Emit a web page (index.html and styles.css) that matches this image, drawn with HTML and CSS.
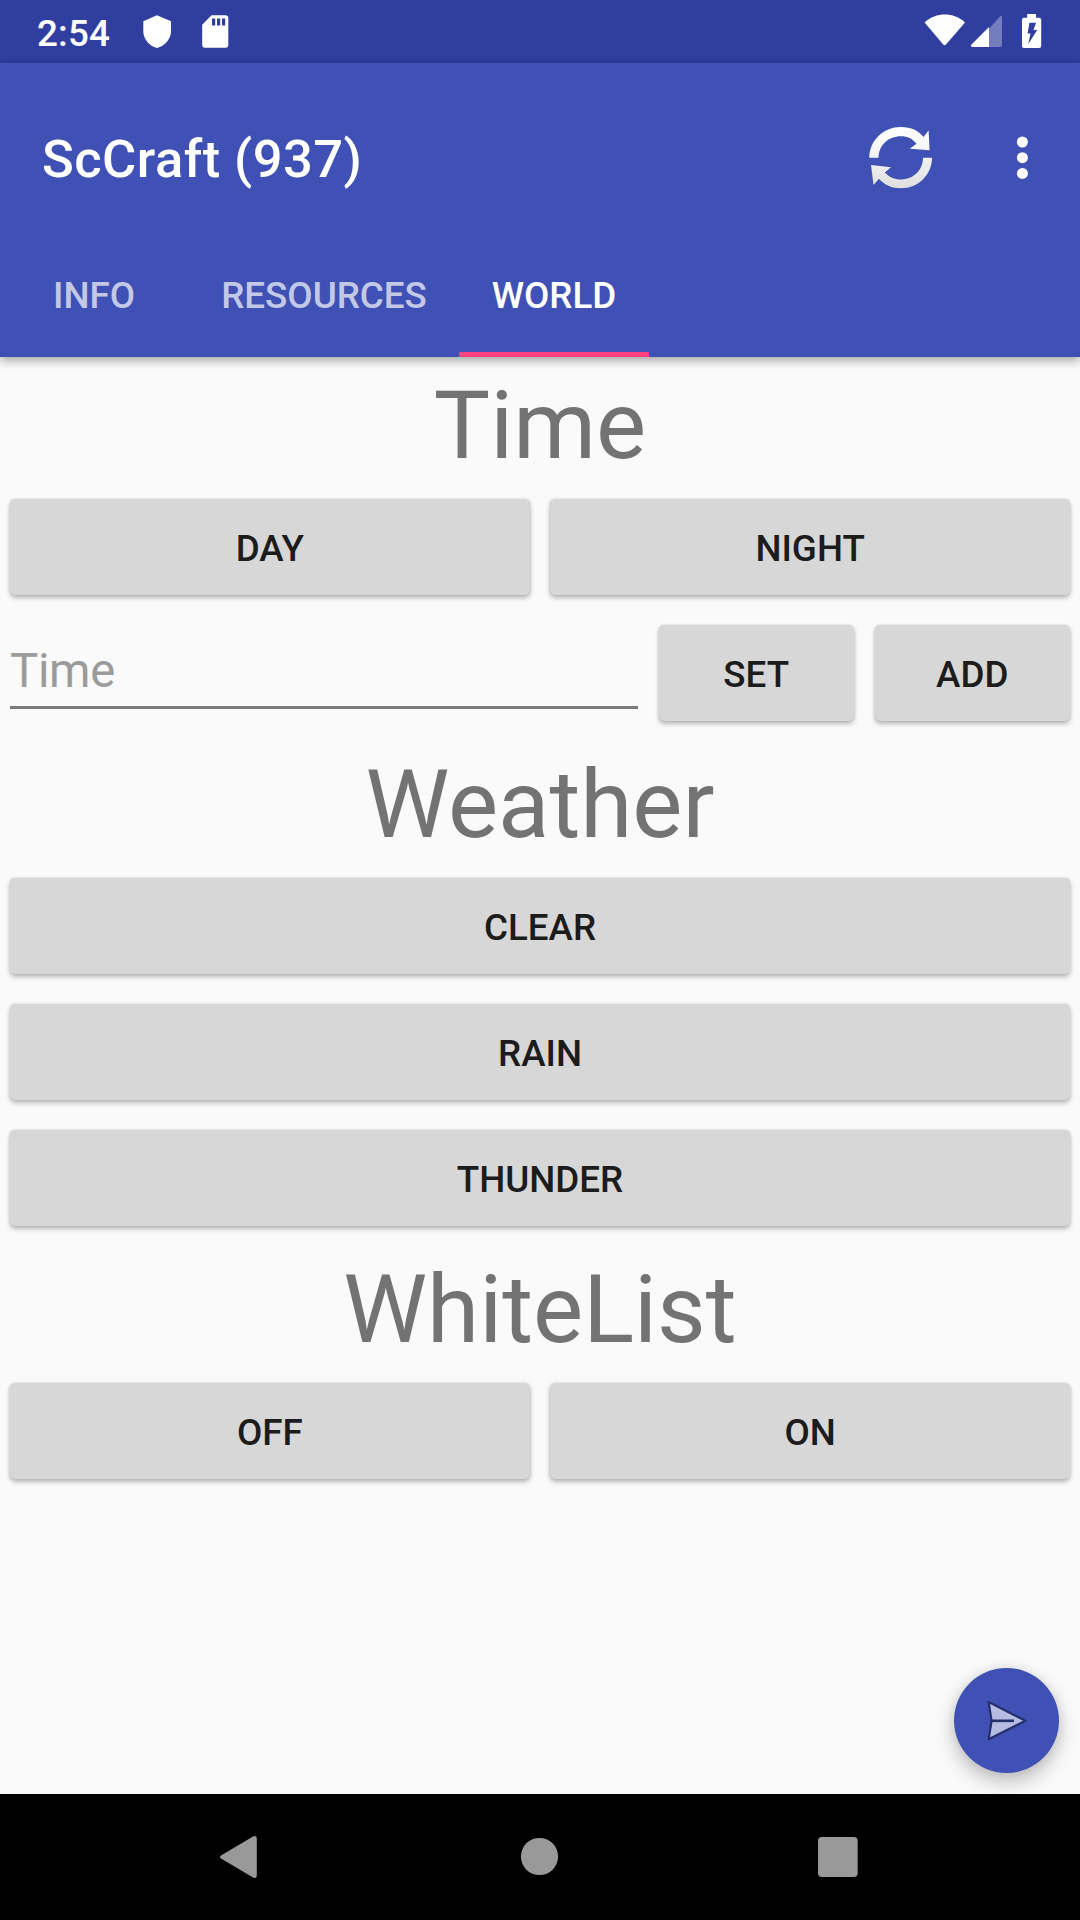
FILE: index.html
```html
<!DOCTYPE html>
<html lang="en">
<head>
<meta charset="utf-8">
<title>ScCraft</title>
<link rel="stylesheet" href="styles.css">
</head>
<body>
<div class="screen">
  <div class="status-bar">
    <span class="clock">2:54</span>
    <svg class="status-left" width="90" height="63" viewBox="140 0 90 63">
      <path fill="#fff" d="M157 15.3 L171 21.2 V31 C171 39 165 46 157 48 C149 46 143.300 39 143.300 31 V21.200 Z"/>
      <path fill="#fff" fill-rule="evenodd" d="M211.500 15.200 H225.500 Q228.300 15.200 228.300 18 V45 Q228.300 47.800 225.500 47.800 H205 Q202.200 47.800 202.200 45 V24.800 Z M212 18.500 V25.500 H215.200 V18.500 Z M217 18.500 V25.500 H220.200 V18.500 Z M222 18.500 V25.500 H225.200 V18.500 Z"/>
    </svg>
    <svg class="status-right" width="120" height="63" viewBox="924 0 120 63">
      <path fill="#fff" d="M924.600 22.500 C936 11.900 953.500 11.900 965 22.500 L946 44.600 Q944.600 46 943.200 44.600 Z"/>
      <path fill="#fff" fill-opacity=".33" d="M1002 16.500 V45 Q1002 47 1000 47 H989 V28.800 L1000 16.600 Q1001 15.500 1002 16.500 Z"/>
      <path fill="#fff" d="M989 27 V47 H972.500 Q970 46.500 971.500 44.500 Z"/>
      <path fill="#fff" fill-rule="evenodd" d="M1027.200 14 H1036 V17.700 H1039 Q1041.200 17.700 1041.200 20 V46 Q1041.200 48 1039 48 H1024 Q1022 48 1022 46 V20 Q1022 17.700 1024 17.700 H1027.200 Z M1029.500 22.800 L1027.500 33.500 H1030.500 L1028.300 44 L1037.200 30 H1033.500 L1036 22.800 Z"/>
    </svg>
  </div>
  <header class="app-bar">
    <div class="toolbar">
      <h1 class="title">ScCraft (937)</h1>
      <svg class="refresh" width="68" height="68" viewBox="866 123 68 68">
        <defs>
          <linearGradient id="silver" x1="0" y1="126" x2="0" y2="188" gradientUnits="userSpaceOnUse">
            <stop offset="0" stop-color="#fff"/><stop offset=".5" stop-color="#f2f2f2"/><stop offset="1" stop-color="#dedede"/>
          </linearGradient>
        </defs>
        <g fill="url(#silver)">
          <path d="M869.300 156.700 C869.300 139 884 125.900 901 125.900 C911 125.900 918.500 129.500 923.500 136 L928.600 129.500 L929.600 149.300 L909.800 147.700 L916.500 142.700 C912.500 137.500 907.500 135.200 901 135.200 C888 135.200 878.600 144.500 878.600 156.700 Z"/>
          <path d="M932 156.800 C932 174 918 187.300 901 187.300 C891.500 187.300 884.500 184 879 177.800 L873.500 184 L871 164 L891 166.300 L884.800 171.500 C889 176 894.500 178.500 901 178.500 C913.500 178.500 923 169 923 156.800 Z"/>
        </g>
      </svg>
      <svg class="more" width="12" height="44" viewBox="0 0 12 44" fill="#fff">
        <circle cx="6.400" cy="6" r="5.500"/><circle cx="6.400" cy="21.700" r="5.500"/><circle cx="6.400" cy="37.400" r="5.500"/>
      </svg>
    </div>
    <nav class="tabs">
      <span class="tab tab-info">INFO</span>
      <span class="tab tab-resources">RESOURCES</span>
      <span class="tab tab-world active">WORLD</span>
    </nav>
  </header>
  <main class="content">
    <h2 class="heading">Time</h2>
    <div class="row"><button class="btn">DAY</button><button class="btn">NIGHT</button></div>
    <div class="row">
      <input class="field" type="text" placeholder="Time">
      <button class="btn small">SET</button><button class="btn small">ADD</button>
    </div>
    <h2 class="heading">Weather</h2>
    <div class="row"><button class="btn">CLEAR</button></div>
    <div class="row"><button class="btn">RAIN</button></div>
    <div class="row"><button class="btn">THUNDER</button></div>
    <h2 class="heading">WhiteList</h2>
    <div class="row"><button class="btn">OFF</button><button class="btn">ON</button></div>
    <button class="fab" aria-label="Send">
      <svg width="105" height="105" viewBox="954 1668 105 105">
        <path d="M988.600 1702 L1025.500 1720.800 L988.600 1739.200 L991.600 1720.800 Z" fill="#b5bce2" stroke="#242f6c" stroke-width="2.200" stroke-linejoin="round"/>
        <path d="M991.600 1720.800 H1014" stroke="#242f6c" stroke-width="2.600"/>
      </svg>
    </button>
  </main>
  <footer class="nav-bar">
    <svg width="1080" height="126" viewBox="0 1794 1080 126" fill="#999">
      <path d="M221 1855.500 L253 1836.600 Q256.800 1835 256.800 1838.500 V1875.500 Q256.800 1879 253 1877.400 L221 1858.500 Q219 1857 221 1855.500 Z"/>
      <circle cx="539.500" cy="1856.500" r="18.600"/>
      <rect x="818" y="1837" width="39.700" height="40" rx="4"/>
    </svg>
  </footer>
</div>
</body>
</html>
```
FILE: styles.css
```css
* { box-sizing: border-box; }
body { margin: 0; font-family: Roboto, sans-serif; background: #fafafa; }
svg { display: block; flex: none; }
h1, h2 { margin: 0; }
.screen { width: 1080px; height: 1920px; display: flex; flex-direction: column; overflow: hidden; }
.status-bar { height: 63px; background: #303f9f; display: flex; align-items: flex-start; padding: 0 36px 0 37px; color: #fff; flex: none; }
.clock { width: 103px; font-size: 36.75px; font-weight: 500; line-height: 43px; letter-spacing: .2px; padding-top: 12px; }
.status-right { margin-left: auto; }
.app-bar { height: 294px; background: #3f51b5; flex: none; box-shadow: 0 3px 10px rgba(0,0,0,.38); z-index: 1; }
.toolbar { height: 168px; padding: 21px 52px 0 42px; display: flex; align-items: center; color: #fff; }
.title { flex: 1; font-size: 52.5px; font-weight: 500; line-height: 62px; letter-spacing: .45px; padding-top: 3px; }
.refresh { margin-right: 82px; }
.tabs { height: 126px; display: flex; }
.tab { display: flex; align-items: center; justify-content: center; font-size: 36.75px; font-weight: 500; color: rgba(255,255,255,.7); border-bottom: 5px solid transparent; padding-top: 8px; }
.tab-info { width: 189px; padding-right: 1px; }
.tab-resources { width: 270px; }
.tab-world { width: 190px; }
.tab.active { color: #fff; border-color: #ff4081; }
.content { flex: 1; position: relative; background: #fafafa; }
.heading { height: 127px; line-height: 111px; padding-top: 13px; font-size: 94.5px; font-weight: 400; color: #737373; text-align: center; }
.row { height: 126px; display: flex; gap: 20.5px; padding: 15px 10px; }
.btn { flex: 1; min-width: 0; border: 0; border-radius: 5px; background: #d7d7d7; color: #1c1c1c; font: 500 36.75px/43px Roboto, sans-serif; padding: 2px 0 0; box-shadow: 0 3px 5px rgba(0,0,0,.26), 0 0 3px rgba(0,0,0,.13); }
.btn.small { flex: 0 0 195.5px; }
.field { flex: 1; min-width: 0; height: 84px; border: 0; border-bottom: 3px solid #7b7b7b; background: none; outline: 0; font: 400 47.25px/55px Roboto, sans-serif; letter-spacing: -.3px; padding: 10px 0 0; }
.field::placeholder { color: #9b9b9b; opacity: 1; }
.fab { position: absolute; right: 21px; bottom: 21px; width: 105px; height: 105px; padding: 0; border: 0; border-radius: 50%; background: #3f51b5; box-shadow: 0 9px 20px rgba(0,0,0,.24), 0 0 12px rgba(0,0,0,.08); }
.nav-bar { height: 126px; background: #000; flex: none; z-index: 1; }
```
